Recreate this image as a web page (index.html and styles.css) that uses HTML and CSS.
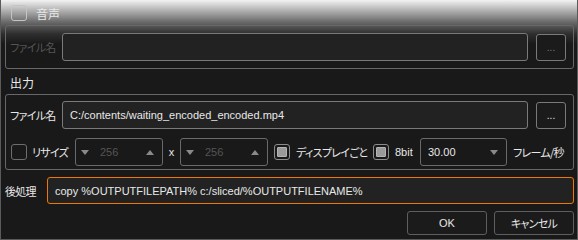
FILE: index.html
```html
<!DOCTYPE html>
<html lang="ja">
<head>
    <meta charset="UTF-8">
    <title>出力設定</title>
    <link rel="stylesheet" href="styles.css">
</head>
<body>
    <!-- 音声 -->
    <div class="section-head">
        <span class="check"></span>
        <span class="head-text jp">音声</span>
    </div>
    <div class="group group-audio">
        <div class="file-row">
            <span class="label jp disabled">ファイル名</span>
            <div class="field"></div>
            <button class="browse" disabled>...</button>
        </div>
    </div>

    <!-- 出力 -->
    <div class="section-head plain">
        <span class="head-text jp">出力</span>
    </div>
    <div class="group group-output">
        <div class="file-row">
            <span class="label jp">ファイル名</span>
            <div class="field">C:/contents/waiting_encoded_encoded.mp4</div>
            <button class="browse">...</button>
        </div>
        <div class="option-row">
            <span class="check first"></span>
            <span class="label jp resize-label">リサイズ</span>
            <div class="spin">
                <svg class="tri" width="8" height="5" viewBox="0 0 8 5"><path d="M0 0h8L4 5z"/></svg>
                <span class="spin-value">256</span>
                <svg class="tri" width="8" height="5" viewBox="0 0 8 5"><path d="M0 5h8L4 0z"/></svg>
            </div>
            <span class="label times">x</span>
            <div class="spin">
                <svg class="tri" width="8" height="5" viewBox="0 0 8 5"><path d="M0 0h8L4 5z"/></svg>
                <span class="spin-value">256</span>
                <svg class="tri" width="8" height="5" viewBox="0 0 8 5"><path d="M0 5h8L4 0z"/></svg>
            </div>
            <span class="check partial gap"><span class="mark"></span></span>
            <span class="label jp display-label">ディスプレイごと</span>
            <span class="check partial"><span class="mark"></span></span>
            <span class="label bit-label">8bit</span>
            <div class="combo">
                <span class="combo-value">30.00</span>
                <svg class="tri" width="8" height="5" viewBox="0 0 8 5"><path d="M0 0h8L4 5z"/></svg>
            </div>
            <span class="label jp fps-label">フレーム/秒</span>
        </div>
    </div>

    <!-- 後処理 -->
    <div class="post-row">
        <span class="label jp post-label">後処理</span>
        <div class="field active">copy %OUTPUTFILEPATH% c:/sliced/%OUTPUTFILENAME%</div>
    </div>

    <div class="actions">
        <button class="btn">OK</button>
        <button class="btn jp">キャンセル</button>
    </div>
</body>
</html>
```

FILE: styles.css
```css
html {
    background-color: #191919;
}
body {
    margin: 0;
    width: 578px;
    height: 240px;
    box-sizing: border-box;
    padding: 0 3px 0 4px;
    border: 1px solid #5a5a5a;
    border-top: none;
    background: linear-gradient(#f2f2f2 0, #b4b4b4 10px, #6a6a6a 22px, #2e2e2e 34px, #191919 44px);
    color: #e8e8e8;
    font-family: 'Liberation Sans', 'Noto Sans CJK JP', sans-serif;
    font-size: 11px;
    overflow: hidden;
}
.jp {
    font-family: 'Noto Sans CJK JP', sans-serif;
    font-size: 11px;
    font-feature-settings: "palt";
    letter-spacing: -0.7px;
}
.section-head {
    height: 25px;
    box-sizing: border-box;
    display: flex;
    align-items: center;
    padding: 5px 0 4px 6px;
}
.section-head.plain {
    padding-left: 5px;
}
.head-text {
    font-size: 12px;
    letter-spacing: 0;
    margin-left: 9px;
}
.section-head.plain .head-text {
    margin-left: 0;
}
.group {
    border: 1px solid #686868;
    border-radius: 3px;
    box-sizing: border-box;
    padding: 0 7px 0 4px;
}
.group-audio {
    height: 44px;
    display: flex;
    align-items: center;
}
.group-audio .file-row {
    flex: 1;
}
.group-output {
    height: 76px;
    padding-top: 6px;
}
.file-row {
    display: flex;
    align-items: center;
    height: 28px;
}
.label {
    white-space: nowrap;
    flex: none;
}
.file-row .label {
    width: 52px;
}
.disabled {
    color: #555;
}
.field {
    flex: 1;
    height: 28px;
    box-sizing: border-box;
    border: 1px solid #7a7a7a;
    border-radius: 3px;
    background-color: #222;
    display: flex;
    align-items: center;
    padding-left: 7px;
    white-space: nowrap;
    overflow: hidden;
}
.browse {
    flex: none;
    width: 30px;
    height: 27px;
    margin-left: 8px;
    box-sizing: border-box;
    border: 1px solid #7a7a7a;
    border-radius: 3px;
    background-color: #1b1b1b;
    color: #e0e0e0;
    font-family: 'Liberation Sans', sans-serif;
    font-size: 10px;
    padding: 0;
}
.browse:disabled {
    color: #777;
}
.check {
    width: 16px;
    height: 16px;
    box-sizing: border-box;
    border: 1px solid #6e6e6e;
    border-radius: 3px;
    flex: none;
    display: flex;
    align-items: center;
    justify-content: center;
}
.section-head .check {
    border-color: #c4c4c4;
}
.check.first {
    margin-left: 1px;
}
.check.partial {
    border-color: #8c8c8c;
}
.check.gap {
    margin-left: 6px;
}
.mark {
    width: 10px;
    height: 10px;
    box-sizing: border-box;
    border: 1px solid #b4b4b4;
    border-radius: 1px;
    background-color: #9a9a9a;
}
.option-row {
    display: flex;
    align-items: center;
    height: 28px;
    margin-top: 9px;
}
.resize-label {
    width: 43px;
    margin-left: 5px;
}
.times {
    width: 17px;
    text-align: center;
}
.display-label {
    width: 71px;
    margin-left: 6px;
    margin-right: 6px;
}
.bit-label {
    width: 25px;
    margin-left: 6px;
}
.fps-label {
    margin-left: 6px;
}
.spin,
.combo {
    flex: none;
    height: 28px;
    box-sizing: border-box;
    border: 1px solid #6a6a6a;
    border-radius: 3px;
    display: flex;
    align-items: center;
}
.spin {
    width: 88px;
    padding: 0 8px 0 5px;
}
.spin-value {
    flex: 1;
    color: #555;
    padding-left: 11px;
}
.tri {
    fill: #8a8a8a;
    flex: none;
}
.combo {
    width: 87px;
    padding: 0 8px 0 7px;
}
.combo-value {
    flex: 1;
}
.post-row {
    display: flex;
    align-items: center;
    margin-top: 7px;
    height: 27px;
}
.post-label {
    width: 42px;
}
.field.active {
    height: 27px;
    border-color: #f07800;
}
.actions {
    display: flex;
    justify-content: flex-end;
    gap: 7px;
    margin-top: 7px;
}
.btn {
    width: 80px;
    height: 24px;
    box-sizing: border-box;
    border: 1px solid #5e5e5e;
    border-radius: 3px;
    background-color: #1b1b1b;
    color: #e8e8e8;
    font-family: 'Liberation Sans', sans-serif;
    font-size: 11px;
    padding: 0;
}
.btn.jp {
    font-family: 'Noto Sans CJK JP', sans-serif;
}
```
